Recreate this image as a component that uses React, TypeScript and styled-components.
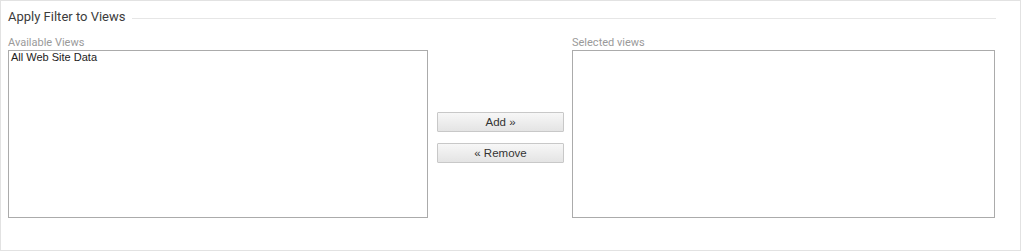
import React from "react";
import styled, { createGlobalStyle } from "styled-components";

const GlobalStyle = createGlobalStyle`
  html, body { margin: 0; padding: 0; background: #ffffff; }
  body { font-family: Roboto, "Liberation Sans", Arial, sans-serif; }
`;

const Frame = styled.div`
  box-sizing: border-box;
  width: 1021px;
  height: 251px;
  border: 1px solid #e2e2e2;
  padding: 8px 0 0 7px;
  background: #fff;
`;

const Header = styled.div`
  display: flex;
  align-items: flex-start;
  width: 988px;
  height: 15px;
`;

const Title = styled.div`
  font-family: Roboto, sans-serif;
  font-size: 13px;
  line-height: 15px;
  color: #3c3c3c;
  white-space: nowrap;
`;

const Rule = styled.div`
  flex: 1;
  height: 1px;
  margin: 9px 0 0 7px;
  background: #e6e6e6;
`;

const Body = styled.div`
  display: flex;
  align-items: flex-start;
  margin-top: 12px;
`;

const Column = styled.div<{ $w: number }>`
  display: flex;
  flex-direction: column;
  width: ${(p) => p.$w}px;
`;

const Label = styled.div`
  font-family: Roboto, sans-serif;
  font-size: 11px;
  line-height: 13px;
  color: #9a9a9a;
  margin-bottom: 1px;
`;

const ListBox = styled.div`
  box-sizing: border-box;
  height: 168px;
  border: 1px solid #ababab;
  padding: 0 2px;
  background: #fff;
`;

const Item = styled.div`
  font-family: "Liberation Sans", Arial, sans-serif;
  font-size: 11px;
  line-height: 13px;
  color: #222;
`;

const Middle = styled.div`
  display: flex;
  flex-direction: column;
  gap: 11px;
  margin: 0 8px 0 9px;
  padding-top: 76px;
`;

const Button = styled.button`
  box-sizing: border-box;
  width: 127px;
  height: 20px;
  padding: 0;
  border: 1px solid #c8c8c8;
  border-radius: 1px;
  background: linear-gradient(#f7f7f7, #e4e4e4);
  font-family: "Liberation Sans", Arial, sans-serif;
  font-size: 11.5px;
  color: #333;
  cursor: pointer;
`;

export default function App() {
  return (
    <>
      <GlobalStyle />
      <Frame>
        <Header>
          <Title>Apply Filter to Views</Title>
          <Rule />
        </Header>
        <Body>
          <Column $w={420}>
            <Label>Available Views</Label>
            <ListBox>
              <Item>All Web Site Data</Item>
            </ListBox>
          </Column>
          <Middle>
            <Button>Add »</Button>
            <Button>« Remove</Button>
          </Middle>
          <Column $w={423}>
            <Label>Selected views</Label>
            <ListBox />
          </Column>
        </Body>
      </Frame>
    </>
  );
}
